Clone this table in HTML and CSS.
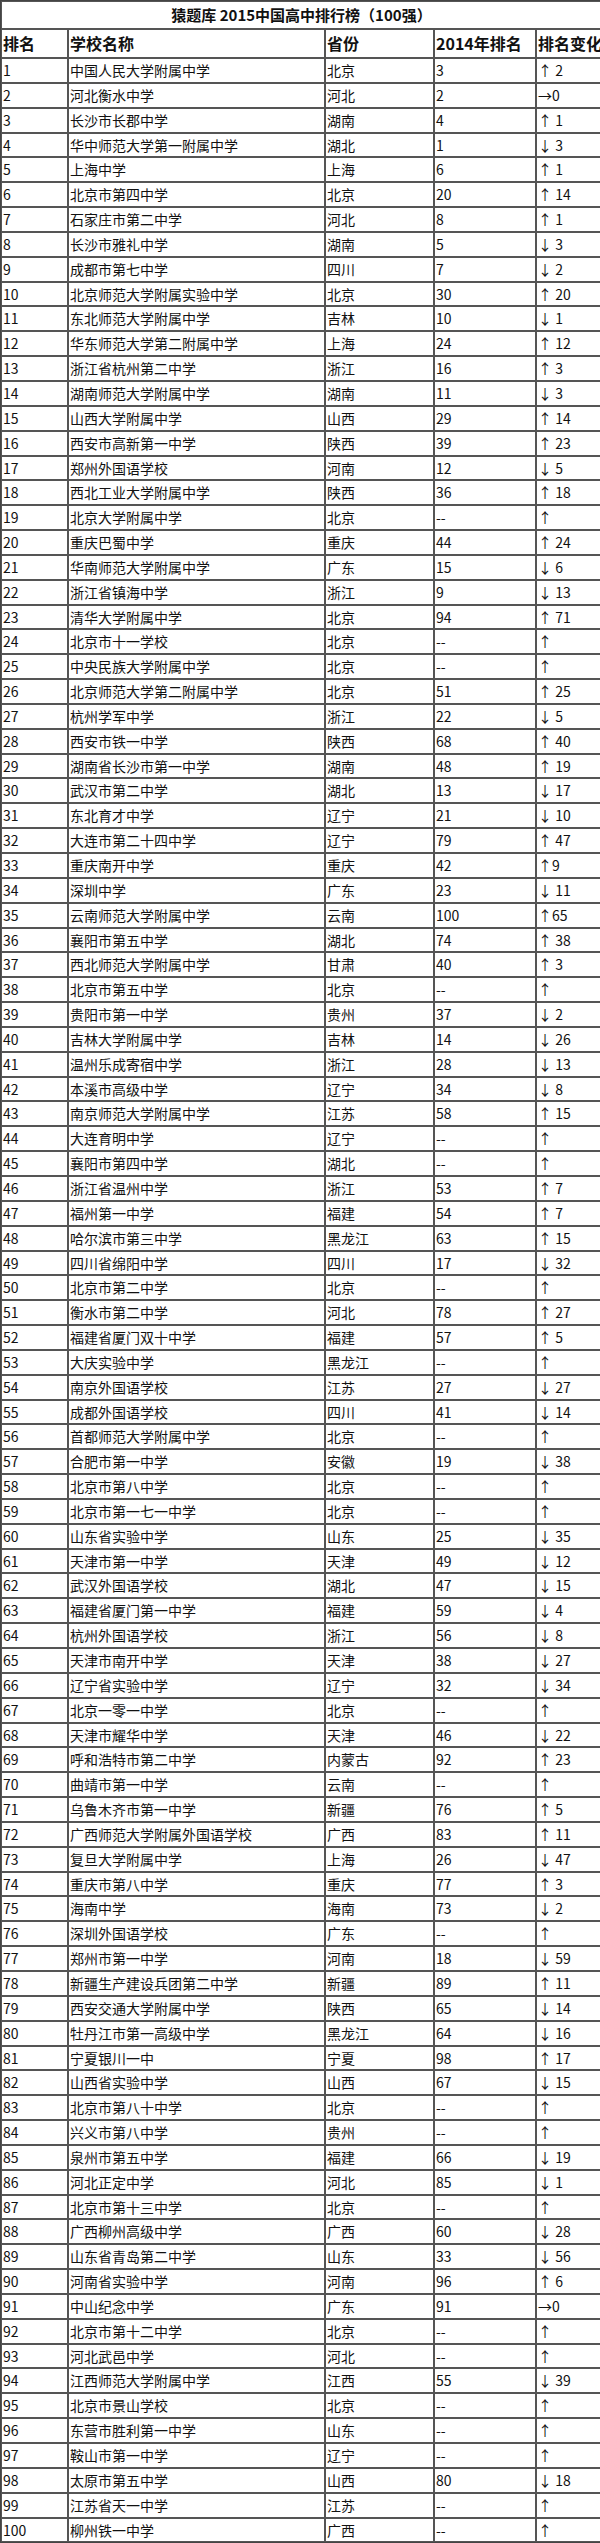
FILE: index.html
```html
<!DOCTYPE html>
<html lang="zh-CN">
<head>
<meta charset="utf-8">
<title>猿题库 2015中国高中排行榜（100强）</title>
<link rel="stylesheet" href="styles.css">
</head>
<body>
<table class="rank">
<colgroup>
<col class="c-rank"><col class="c-name"><col class="c-prov"><col class="c-prev"><col class="c-chg">
</colgroup>
<thead>
<tr class="title-row"><th colspan="5">猿题库 2015中国高中排行榜（100强）</th></tr>
<tr class="head-row"><th>排名</th><th>学校名称</th><th>省份</th><th>2014年排名</th><th>排名变化</th></tr>
</thead>
<tbody>
<tr><td>1</td><td>中国人民大学附属中学</td><td>北京</td><td>3</td><td>↑ 2</td></tr>
<tr><td>2</td><td>河北衡水中学</td><td>河北</td><td>2</td><td>→0</td></tr>
<tr><td>3</td><td>长沙市长郡中学</td><td>湖南</td><td>4</td><td>↑ 1</td></tr>
<tr><td>4</td><td>华中师范大学第一附属中学</td><td>湖北</td><td>1</td><td>↓ 3</td></tr>
<tr><td>5</td><td>上海中学</td><td>上海</td><td>6</td><td>↑ 1</td></tr>
<tr><td>6</td><td>北京市第四中学</td><td>北京</td><td>20</td><td>↑ 14</td></tr>
<tr><td>7</td><td>石家庄市第二中学</td><td>河北</td><td>8</td><td>↑ 1</td></tr>
<tr><td>8</td><td>长沙市雅礼中学</td><td>湖南</td><td>5</td><td>↓ 3</td></tr>
<tr><td>9</td><td>成都市第七中学</td><td>四川</td><td>7</td><td>↓ 2</td></tr>
<tr><td>10</td><td>北京师范大学附属实验中学</td><td>北京</td><td>30</td><td>↑ 20</td></tr>
<tr><td>11</td><td>东北师范大学附属中学</td><td>吉林</td><td>10</td><td>↓ 1</td></tr>
<tr><td>12</td><td>华东师范大学第二附属中学</td><td>上海</td><td>24</td><td>↑ 12</td></tr>
<tr><td>13</td><td>浙江省杭州第二中学</td><td>浙江</td><td>16</td><td>↑ 3</td></tr>
<tr><td>14</td><td>湖南师范大学附属中学</td><td>湖南</td><td>11</td><td>↓ 3</td></tr>
<tr><td>15</td><td>山西大学附属中学</td><td>山西</td><td>29</td><td>↑ 14</td></tr>
<tr><td>16</td><td>西安市高新第一中学</td><td>陕西</td><td>39</td><td>↑ 23</td></tr>
<tr><td>17</td><td>郑州外国语学校</td><td>河南</td><td>12</td><td>↓ 5</td></tr>
<tr><td>18</td><td>西北工业大学附属中学</td><td>陕西</td><td>36</td><td>↑ 18</td></tr>
<tr><td>19</td><td>北京大学附属中学</td><td>北京</td><td>--</td><td>↑</td></tr>
<tr><td>20</td><td>重庆巴蜀中学</td><td>重庆</td><td>44</td><td>↑ 24</td></tr>
<tr><td>21</td><td>华南师范大学附属中学</td><td>广东</td><td>15</td><td>↓ 6</td></tr>
<tr><td>22</td><td>浙江省镇海中学</td><td>浙江</td><td>9</td><td>↓ 13</td></tr>
<tr><td>23</td><td>清华大学附属中学</td><td>北京</td><td>94</td><td>↑ 71</td></tr>
<tr><td>24</td><td>北京市十一学校</td><td>北京</td><td>--</td><td>↑</td></tr>
<tr><td>25</td><td>中央民族大学附属中学</td><td>北京</td><td>--</td><td>↑</td></tr>
<tr><td>26</td><td>北京师范大学第二附属中学</td><td>北京</td><td>51</td><td>↑ 25</td></tr>
<tr><td>27</td><td>杭州学军中学</td><td>浙江</td><td>22</td><td>↓ 5</td></tr>
<tr><td>28</td><td>西安市铁一中学</td><td>陕西</td><td>68</td><td>↑ 40</td></tr>
<tr><td>29</td><td>湖南省长沙市第一中学</td><td>湖南</td><td>48</td><td>↑ 19</td></tr>
<tr><td>30</td><td>武汉市第二中学</td><td>湖北</td><td>13</td><td>↓ 17</td></tr>
<tr><td>31</td><td>东北育才中学</td><td>辽宁</td><td>21</td><td>↓ 10</td></tr>
<tr><td>32</td><td>大连市第二十四中学</td><td>辽宁</td><td>79</td><td>↑ 47</td></tr>
<tr><td>33</td><td>重庆南开中学</td><td>重庆</td><td>42</td><td>↑9</td></tr>
<tr><td>34</td><td>深圳中学</td><td>广东</td><td>23</td><td>↓ 11</td></tr>
<tr><td>35</td><td>云南师范大学附属中学</td><td>云南</td><td>100</td><td>↑65</td></tr>
<tr><td>36</td><td>襄阳市第五中学</td><td>湖北</td><td>74</td><td>↑ 38</td></tr>
<tr><td>37</td><td>西北师范大学附属中学</td><td>甘肃</td><td>40</td><td>↑ 3</td></tr>
<tr><td>38</td><td>北京市第五中学</td><td>北京</td><td>--</td><td>↑</td></tr>
<tr><td>39</td><td>贵阳市第一中学</td><td>贵州</td><td>37</td><td>↓ 2</td></tr>
<tr><td>40</td><td>吉林大学附属中学</td><td>吉林</td><td>14</td><td>↓ 26</td></tr>
<tr><td>41</td><td>温州乐成寄宿中学</td><td>浙江</td><td>28</td><td>↓ 13</td></tr>
<tr><td>42</td><td>本溪市高级中学</td><td>辽宁</td><td>34</td><td>↓ 8</td></tr>
<tr><td>43</td><td>南京师范大学附属中学</td><td>江苏</td><td>58</td><td>↑ 15</td></tr>
<tr><td>44</td><td>大连育明中学</td><td>辽宁</td><td>--</td><td>↑</td></tr>
<tr><td>45</td><td>襄阳市第四中学</td><td>湖北</td><td>--</td><td>↑</td></tr>
<tr><td>46</td><td>浙江省温州中学</td><td>浙江</td><td>53</td><td>↑ 7</td></tr>
<tr><td>47</td><td>福州第一中学</td><td>福建</td><td>54</td><td>↑ 7</td></tr>
<tr><td>48</td><td>哈尔滨市第三中学</td><td>黑龙江</td><td>63</td><td>↑ 15</td></tr>
<tr><td>49</td><td>四川省绵阳中学</td><td>四川</td><td>17</td><td>↓ 32</td></tr>
<tr><td>50</td><td>北京市第二中学</td><td>北京</td><td>--</td><td>↑</td></tr>
<tr><td>51</td><td>衡水市第二中学</td><td>河北</td><td>78</td><td>↑ 27</td></tr>
<tr><td>52</td><td>福建省厦门双十中学</td><td>福建</td><td>57</td><td>↑ 5</td></tr>
<tr><td>53</td><td>大庆实验中学</td><td>黑龙江</td><td>--</td><td>↑</td></tr>
<tr><td>54</td><td>南京外国语学校</td><td>江苏</td><td>27</td><td>↓ 27</td></tr>
<tr><td>55</td><td>成都外国语学校</td><td>四川</td><td>41</td><td>↓ 14</td></tr>
<tr><td>56</td><td>首都师范大学附属中学</td><td>北京</td><td>--</td><td>↑</td></tr>
<tr><td>57</td><td>合肥市第一中学</td><td>安徽</td><td>19</td><td>↓ 38</td></tr>
<tr><td>58</td><td>北京市第八中学</td><td>北京</td><td>--</td><td>↑</td></tr>
<tr><td>59</td><td>北京市第一七一中学</td><td>北京</td><td>--</td><td>↑</td></tr>
<tr><td>60</td><td>山东省实验中学</td><td>山东</td><td>25</td><td>↓ 35</td></tr>
<tr><td>61</td><td>天津市第一中学</td><td>天津</td><td>49</td><td>↓ 12</td></tr>
<tr><td>62</td><td>武汉外国语学校</td><td>湖北</td><td>47</td><td>↓ 15</td></tr>
<tr><td>63</td><td>福建省厦门第一中学</td><td>福建</td><td>59</td><td>↓ 4</td></tr>
<tr><td>64</td><td>杭州外国语学校</td><td>浙江</td><td>56</td><td>↓ 8</td></tr>
<tr><td>65</td><td>天津市南开中学</td><td>天津</td><td>38</td><td>↓ 27</td></tr>
<tr><td>66</td><td>辽宁省实验中学</td><td>辽宁</td><td>32</td><td>↓ 34</td></tr>
<tr><td>67</td><td>北京一零一中学</td><td>北京</td><td>--</td><td>↑</td></tr>
<tr><td>68</td><td>天津市耀华中学</td><td>天津</td><td>46</td><td>↓ 22</td></tr>
<tr><td>69</td><td>呼和浩特市第二中学</td><td>内蒙古</td><td>92</td><td>↑ 23</td></tr>
<tr><td>70</td><td>曲靖市第一中学</td><td>云南</td><td>--</td><td>↑</td></tr>
<tr><td>71</td><td>乌鲁木齐市第一中学</td><td>新疆</td><td>76</td><td>↑ 5</td></tr>
<tr><td>72</td><td>广西师范大学附属外国语学校</td><td>广西</td><td>83</td><td>↑ 11</td></tr>
<tr><td>73</td><td>复旦大学附属中学</td><td>上海</td><td>26</td><td>↓ 47</td></tr>
<tr><td>74</td><td>重庆市第八中学</td><td>重庆</td><td>77</td><td>↑ 3</td></tr>
<tr><td>75</td><td>海南中学</td><td>海南</td><td>73</td><td>↓ 2</td></tr>
<tr><td>76</td><td>深圳外国语学校</td><td>广东</td><td>--</td><td>↑</td></tr>
<tr><td>77</td><td>郑州市第一中学</td><td>河南</td><td>18</td><td>↓ 59</td></tr>
<tr><td>78</td><td>新疆生产建设兵团第二中学</td><td>新疆</td><td>89</td><td>↑ 11</td></tr>
<tr><td>79</td><td>西安交通大学附属中学</td><td>陕西</td><td>65</td><td>↓ 14</td></tr>
<tr><td>80</td><td>牡丹江市第一高级中学</td><td>黑龙江</td><td>64</td><td>↓ 16</td></tr>
<tr><td>81</td><td>宁夏银川一中</td><td>宁夏</td><td>98</td><td>↑ 17</td></tr>
<tr><td>82</td><td>山西省实验中学</td><td>山西</td><td>67</td><td>↓ 15</td></tr>
<tr><td>83</td><td>北京市第八十中学</td><td>北京</td><td>--</td><td>↑</td></tr>
<tr><td>84</td><td>兴义市第八中学</td><td>贵州</td><td>--</td><td>↑</td></tr>
<tr><td>85</td><td>泉州市第五中学</td><td>福建</td><td>66</td><td>↓ 19</td></tr>
<tr><td>86</td><td>河北正定中学</td><td>河北</td><td>85</td><td>↓ 1</td></tr>
<tr><td>87</td><td>北京市第十三中学</td><td>北京</td><td>--</td><td>↑</td></tr>
<tr><td>88</td><td>广西柳州高级中学</td><td>广西</td><td>60</td><td>↓ 28</td></tr>
<tr><td>89</td><td>山东省青岛第二中学</td><td>山东</td><td>33</td><td>↓ 56</td></tr>
<tr><td>90</td><td>河南省实验中学</td><td>河南</td><td>96</td><td>↑ 6</td></tr>
<tr><td>91</td><td>中山纪念中学</td><td>广东</td><td>91</td><td>→0</td></tr>
<tr><td>92</td><td>北京市第十二中学</td><td>北京</td><td>--</td><td>↑</td></tr>
<tr><td>93</td><td>河北武邑中学</td><td>河北</td><td>--</td><td>↑</td></tr>
<tr><td>94</td><td>江西师范大学附属中学</td><td>江西</td><td>55</td><td>↓ 39</td></tr>
<tr><td>95</td><td>北京市景山学校</td><td>北京</td><td>--</td><td>↑</td></tr>
<tr><td>96</td><td>东营市胜利第一中学</td><td>山东</td><td>--</td><td>↑</td></tr>
<tr><td>97</td><td>鞍山市第一中学</td><td>辽宁</td><td>--</td><td>↑</td></tr>
<tr><td>98</td><td>太原市第五中学</td><td>山西</td><td>80</td><td>↓ 18</td></tr>
<tr><td>99</td><td>江苏省天一中学</td><td>江苏</td><td>--</td><td>↑</td></tr>
<tr><td>100</td><td>柳州铁一中学</td><td>广西</td><td>--</td><td>↑</td></tr>
</tbody>
</table>
</body>
</html>
```

FILE: styles.css
```css
html, body {
  margin: 0;
  padding: 0;
  background: #ffffff;
}

body {
  font-family: "Noto Sans CJK SC", "Noto Sans", sans-serif;
  color: #111111;
}

.rank {
  width: 600px;
  table-layout: fixed;
  border-collapse: separate;
  border-spacing: 0;
  border: 1px solid #444444;
}

.c-rank { width: 67px; }
.c-name { width: 257px; }
.c-prov { width: 109px; }
.c-prev { width: 102px; }
.c-chg  { width: 65px; }

.rank th,
.rank td {
  border: 1px solid #555555;
  padding: 0 0 0 1px;
  text-align: left;
  vertical-align: middle;
  white-space: nowrap;
  overflow: hidden;
  line-height: 1.2;
}

.rank td {
  font-size: 14px;
}

.title-row {
  height: 28px;
}

.title-row th {
  text-align: center;
  font-size: 15px;
  font-weight: bold;
}

.head-row {
  height: 29px;
}

.head-row th {
  font-size: 16px;
  font-weight: bold;
}

.rank tbody tr {
  height: 24.85px;
}
```
